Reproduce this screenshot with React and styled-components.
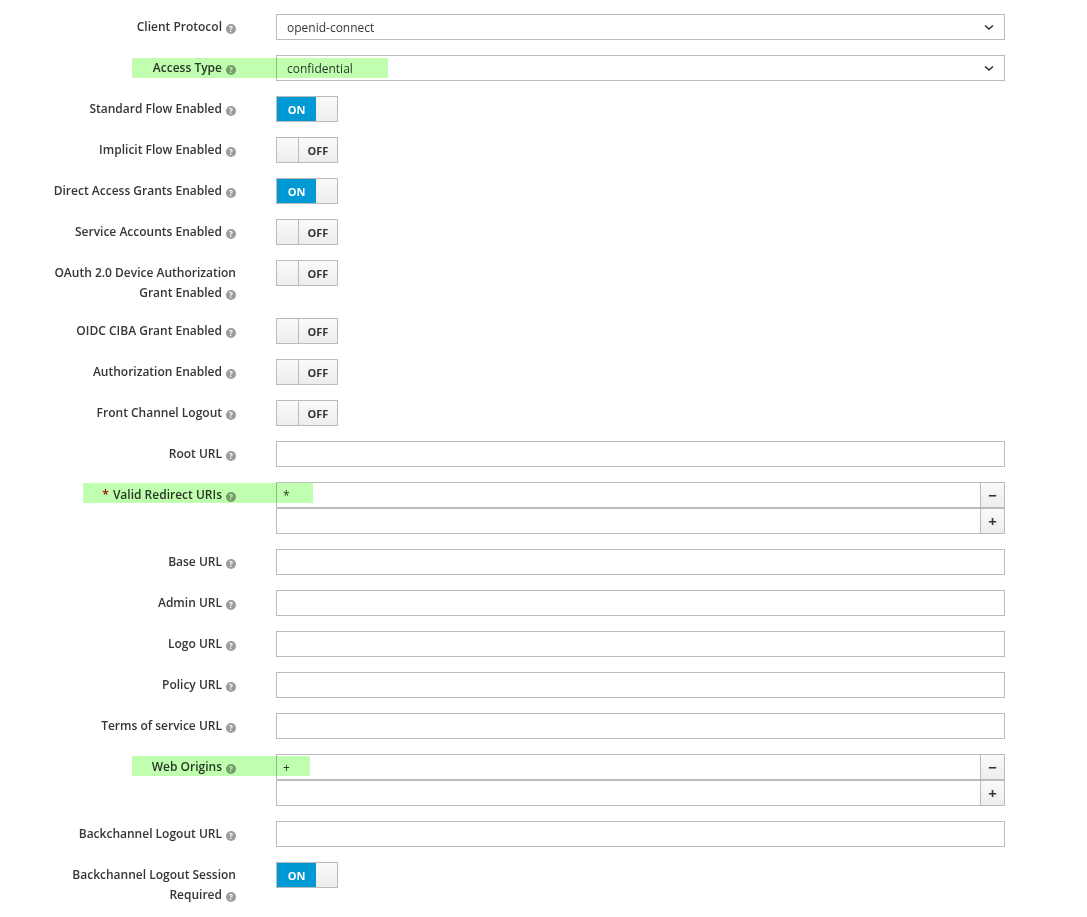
import React from 'react';
import styled, { createGlobalStyle } from 'styled-components';

const Global = createGlobalStyle`
  body { margin: 0; background: #fff; font-family: "Open Sans", sans-serif; font-size: 12px; color: #363636; }
`;

const Form = styled.div`
  padding-top: 14px;
  width: 1005px;
`;

const Row = styled.div`
  position: relative;
  display: grid;
  grid-template-columns: 236px 729px;
  column-gap: 40px;
  margin-bottom: 15px;
`;

const Label = styled.div`
  text-align: right;
  font-weight: 600;
  line-height: 20px;
  padding-top: 3px;
  white-space: pre-line;
`;

const Req = styled.span`
  color: #c00;
  margin-right: 4px;
`;

const Help = styled.span`
  display: inline-block;
  width: 10px;
  height: 10px;
  border-radius: 50%;
  background: #9c9c9c;
  color: #fff;
  font-size: 8px;
  font-weight: 700;
  line-height: 10px;
  text-align: center;
  margin-left: 4px;
  vertical-align: -0.5px;
`;

const Mark = styled.div`
  position: absolute;
  z-index: 2;
  top: ${p => p.top}px;
  left: ${p => p.left}px;
  width: ${p => p.w}px;
  height: 20px;
  background: #c0ffb0;
  mix-blend-mode: multiply;
  pointer-events: none;
`;

const Select = styled.div`
  height: 26px;
  box-sizing: border-box;
  border: 1px solid #bbb;
  padding: 0 10px;
  display: flex;
  align-items: center;
  justify-content: space-between;
`;

const InputRow = styled.div`
  display: flex;
`;

const Input = styled.div`
  height: 26px;
  box-sizing: border-box;
  border: 1px solid #bbb;
  padding: 0 6px;
  display: flex;
  align-items: center;
  flex: 1;
`;

const Multi = styled.div`
  display: flex;
  flex-direction: column;
`;

const SideBtn = styled.div`
  width: 24px;
  height: 26px;
  box-sizing: border-box;
  border: 1px solid #bbb;
  border-left: none;
  background: linear-gradient(#fafafa, #ededed);
  display: flex;
  align-items: center;
  justify-content: center;
  font-size: 15px;
  font-weight: 700;
  color: #363636;
`;

const Toggle = styled.div`
  width: 62px;
  height: 26px;
  box-sizing: border-box;
  border: 1px solid #bbb;
  display: flex;
  font-size: 11px;
  font-weight: 700;
`;

const Part = styled.div`
  display: flex;
  align-items: center;
  justify-content: center;
  width: ${p => p.w}px;
  background: ${p => (p.on ? '#0099d3' : 'linear-gradient(#fafafa, #ededed)')};
  color: ${p => (p.on ? '#fff' : '#363636')};
  border-left: ${p => (p.sep ? '1px solid #bbb' : 'none')};
`;

const Chevron = () => (
  <svg width="10" height="7" viewBox="0 0 10 7">
    <path d="M1 1.5 L5 5 L9 1.5" stroke="#333" strokeWidth="1.6" fill="none" />
  </svg>
);

const Switch = ({ on }) => (
  <Toggle>
    {on ? (
      <>
        <Part on w={39}>ON</Part>
        <Part w={21} />
      </>
    ) : (
      <>
        <Part w={21} />
        <Part sep w={39}>OFF</Part>
      </>
    )}
  </Toggle>
);

const Lbl = ({ text, req }) => (
  <Label>
    {req && <Req>*</Req>}
    {text}
    <Help>?</Help>
  </Label>
);

const rows = [
  { label: 'Client Protocol', type: 'select', value: 'openid-connect' },
  { label: 'Access Type', type: 'select', value: 'confidential', mark: { top: 3, left: 132, w: 256 } },
  { label: 'Standard Flow Enabled', type: 'switch', on: true },
  { label: 'Implicit Flow Enabled', type: 'switch' },
  { label: 'Direct Access Grants Enabled', type: 'switch', on: true },
  { label: 'Service Accounts Enabled', type: 'switch' },
  { label: 'OAuth 2.0 Device Authorization\nGrant Enabled', type: 'switch' },
  { label: 'OIDC CIBA Grant Enabled', type: 'switch' },
  { label: 'Authorization Enabled', type: 'switch' },
  { label: 'Front Channel Logout', type: 'switch' },
  { label: 'Root URL', type: 'input' },
  { label: 'Valid Redirect URIs', req: true, type: 'multi', value: '*', mark: { top: 1, left: 83, w: 230 } },
  { label: 'Base URL', type: 'input' },
  { label: 'Admin URL', type: 'input' },
  { label: 'Logo URL', type: 'input' },
  { label: 'Policy URL', type: 'input' },
  { label: 'Terms of service URL', type: 'input' },
  { label: 'Web Origins', type: 'multi', value: '+', mark: { top: 2, left: 132, w: 178 } },
  { label: 'Backchannel Logout URL', type: 'input' },
  { label: 'Backchannel Logout Session\nRequired', type: 'switch', on: true },
];

const Control = ({ r }) => {
  if (r.type === 'select')
    return (
      <Select>
        <span>{r.value}</span>
        <Chevron />
      </Select>
    );
  if (r.type === 'switch') return <div><Switch on={r.on} /></div>;
  if (r.type === 'multi')
    return (
      <Multi>
        <InputRow>
          <Input>{r.value}</Input>
          <SideBtn>−</SideBtn>
        </InputRow>
        <InputRow>
          <Input />
          <SideBtn>+</SideBtn>
        </InputRow>
      </Multi>
    );
  return <InputRow><Input /></InputRow>;
};

export default function App() {
  return (
    <>
      <Global />
      <Form>
        {rows.map(r => (
          <Row key={r.label}>
            {r.mark && <Mark {...r.mark} />}
            <Lbl text={r.label} req={r.req} />
            <Control r={r} />
          </Row>
        ))}
      </Form>
    </>
  );
}
